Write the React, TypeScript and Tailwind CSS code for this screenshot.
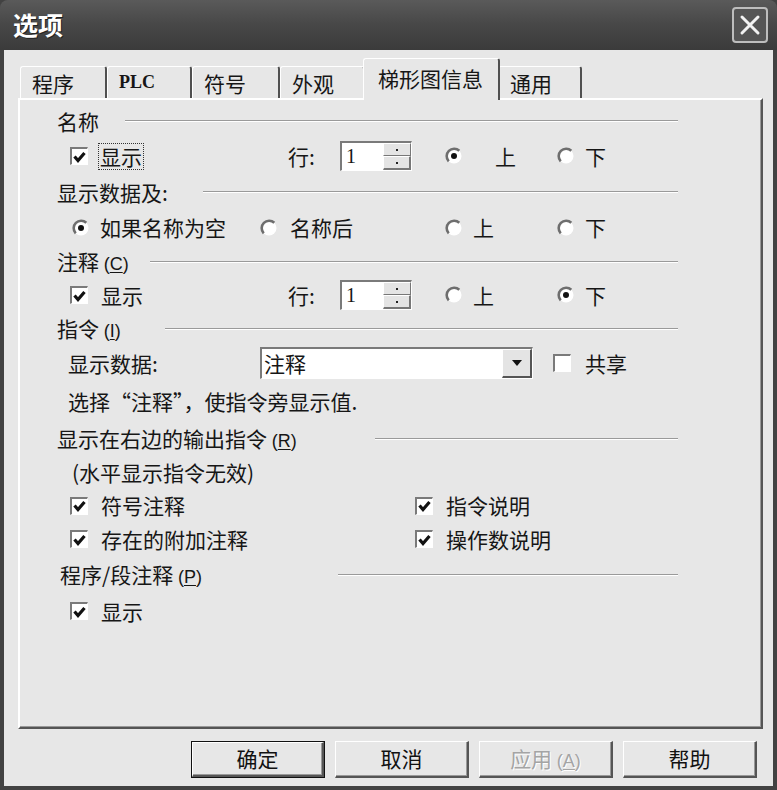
import React from "react";

const FONT = "font-['Noto_Sans_CJK_SC','Noto_Sans_CJK_JP',sans-serif]";

function Check({ checked = true }: { checked?: boolean }) {
  return (
    <span className="flex h-[18px] w-[18px] shrink-0 items-center justify-center border-l-2 border-t-2 border-r border-b border-l-[#7a7a7a] border-t-[#7a7a7a] border-r-white border-b-white bg-white">
      {checked && (
        <svg width="13" height="12" viewBox="0 0 13 12">
          <path d="M1.5 5.5 L5 9.5 L11.5 2" fill="none" stroke="#111" strokeWidth="3.2" />
        </svg>
      )}
    </span>
  );
}

function Radio({ on = false }: { on?: boolean }) {
  return (
    <svg width="18" height="18" viewBox="0 0 18 18" className="shrink-0">
      <circle cx="9" cy="9" r="7.5" fill="#fff" />
      <path d="M14.3 3.7 A7.5 7.5 0 0 0 3.7 14.3" fill="none" stroke="#6e6e6e" strokeWidth="2.6" />
      {on && <circle cx="9" cy="9" r="3" fill="#111" />}
    </svg>
  );
}

function Spin() {
  return (
    <div className="flex h-[30px] w-[72px] shrink-0 border-l-2 border-t-2 border-r border-b border-l-[#7a7a7a] border-t-[#7a7a7a] border-r-white border-b-white bg-white">
      <span className="flex-1 pl-[4px] font-['Liberation_Serif',serif] text-[20px] leading-[27px]">1</span>
      <div className="flex w-[28px] flex-col">
        <div className="flex flex-1 items-center justify-center border-b border-r border-b-[#777] border-r-[#777] border-l border-t border-l-white border-t-white bg-[#e4e4e4]">
          <span className="h-[2px] w-[2px] bg-[#222]" />
        </div>
        <div className="flex flex-1 items-center justify-center border-b-2 border-r-2 border-b-[#777] border-r-[#777] border-l border-t border-l-white border-t-white bg-[#e4e4e4]">
          <span className="h-[2px] w-[2px] bg-[#222]" />
        </div>
      </div>
    </div>
  );
}

function Header({ text, cell, pl = "pl-[37px]", h }: { text: React.ReactNode; cell: string; pl?: string; h: string }) {
  return (
    <div className={`flex items-center pr-[83px] ${pl} ${h}`}>
      <span className={`shrink-0 whitespace-nowrap ${cell}`}>{text}</span>
      <div className="h-[2px] flex-1 border-t border-b border-t-[#9a9a9a] border-b-white" />
    </div>
  );
}

function Key({ k }: { k: string }) {
  return (
    <span className="font-['Liberation_Sans',sans-serif] text-[18px]">
      (<span className="underline underline-offset-2">{k}</span>)
    </span>
  );
}

function Tab({ label, w, active = false, latin = false }: { label: string; w: string; active?: boolean; latin?: boolean }) {
  if (active) {
    return (
      <div className={`relative z-10 -mb-[2px] -mx-[2px] flex h-[42px] items-start pt-[5px] pl-[14px] rounded-t-[3px] border-l border-t border-l-white border-t-white border-r-2 border-r-[#505050] bg-[#e7e7e7] ${w}`}>
        <span className="text-[21px] leading-[28px]">{label}</span>
      </div>
    );
  }
  return (
    <div className={`flex h-[32px] items-center pl-[11px] rounded-t-[3px] border-l border-t border-l-white border-t-white border-r-2 border-r-[#505050] ${w}`}>
      <span className={latin ? "font-['Liberation_Serif',serif] text-[18px] font-bold" : "text-[21px] leading-[28px]"}>{label}</span>
    </div>
  );
}

function Btn({ label, def = false, disabled = false }: { label: React.ReactNode; def?: boolean; disabled?: boolean }) {
  return (
    <div className={`flex h-[37px] w-[134px] items-center justify-center ${def ? "border border-[#111]" : ""}`}>
      <div className="flex h-full w-full items-center justify-center border-l border-t border-l-white border-t-white border-r-2 border-b-2 border-r-[#555] border-b-[#555] bg-[#e7e7e7] shadow-[inset_-1px_-1px_#999]">
        <span className={`text-[21px] ${disabled ? "text-[#a4a4a4] [text-shadow:1px_1px_#fff]" : "text-[#111]"}`}>{label}</span>
      </div>
    </div>
  );
}

export default function App() {
  return (
    <div className={`flex h-[790px] w-[777px] flex-col bg-[#424242] text-[#161616] ${FONT}`}>
      {/* title bar */}
      <div className="flex h-[50px] shrink-0 items-center justify-between rounded-t-[8px] bg-gradient-to-b from-[#5a5a5a] via-[#474747] to-[#3b3b3b] pl-[13px] pr-[9px]">
        <span className="text-[25px] font-bold text-white [text-shadow:1px_1px_#222]">选项</span>
        <div className="flex h-[36px] w-[36px] items-center justify-center rounded-[4px] border-2 border-[#bdbdbd] bg-[#555]">
          <svg width="22" height="22" viewBox="0 0 22 22">
            <path d="M3 3 L19 19 M19 3 L3 19" stroke="#f2f2f2" strokeWidth="3" strokeLinecap="round" />
          </svg>
        </div>
      </div>

      {/* body */}
      <div className="mx-[4px] mb-[4px] flex flex-1 flex-col bg-[#e7e7e7]">
        {/* tabs */}
        <div className="flex h-[48px] shrink-0 items-end pl-[16px]">
          <Tab label="程序" w="w-[87px]" />
          <Tab label="PLC" w="w-[85px]" latin />
          <Tab label="符号" w="w-[88px]" />
          <Tab label="外观" w="w-[85px]" />
          <Tab label="梯形图信息" w="w-[137px]" active />
          <Tab label="通用" w="w-[84px]" />
        </div>

        {/* panel */}
        <div className="ml-[14px] mr-[10px] flex h-[631px] shrink-0 flex-col border-l-2 border-t-2 border-l-white border-t-white border-r-2 border-b-2 border-r-[#555] border-b-[#555] pt-[4px] text-[21px] leading-none shadow-[inset_-1px_-1px_#999]">
          <Header text="名称" cell="w-[68px]" h="h-[34px]" />

          <div className="flex h-[36px] items-center pl-[50px]">
            <div className="flex w-[218px] items-center">
              <Check />
              <span className="ml-[10px] border border-dotted border-[#333] px-[1px] py-[2px]">显示</span>
            </div>
            <span className="w-[52px]">行:</span>
            <Spin />
            <div className="w-[33px]" />
            <div className="flex w-[112px] items-center">
              <Radio on />
              <span className="ml-[32px]">上</span>
            </div>
            <Radio />
            <span className="ml-[10px]">下</span>
          </div>

          <Header text="显示数据及:" cell="w-[146px]" h="h-[36px]" />

          <div className="flex h-[35px] items-center pl-[52px]">
            <div className="flex w-[188px] items-center">
              <Radio on />
              <span className="ml-[10px]">如果名称为空</span>
            </div>
            <div className="flex w-[185px] items-center">
              <Radio />
              <span className="ml-[12px]">名称后</span>
            </div>
            <div className="flex w-[112px] items-center">
              <Radio />
              <span className="ml-[10px]">上</span>
            </div>
            <Radio />
            <span className="ml-[10px]">下</span>
          </div>

          <Header text={<>注释 <Key k="C" /></>} cell="w-[93px]" h="h-[33px]" />

          <div className="flex h-[34px] items-center pl-[50px]">
            <div className="flex w-[218px] items-center">
              <Check />
              <span className="ml-[13px]">显示</span>
            </div>
            <span className="w-[52px]">行:</span>
            <Spin />
            <div className="w-[33px]" />
            <div className="flex w-[112px] items-center">
              <Radio />
              <span className="ml-[10px]">上</span>
            </div>
            <Radio on />
            <span className="ml-[10px]">下</span>
          </div>

          <Header text={<>指令 <Key k="I" /></>} cell="w-[108px]" h="h-[33px]" />

          <div className="flex h-[36px] items-center pl-[48px]">
            <span className="w-[192px]">显示数据:</span>
            <div className="flex h-[32px] w-[273px] border-l-2 border-t-2 border-r border-b border-l-[#7a7a7a] border-t-[#7a7a7a] border-r-white border-b-white bg-white">
              <span className="flex-1 pl-[2px] leading-[28px]">注释</span>
              <div className="flex w-[30px] items-center justify-center border-l border-t border-l-white border-t-white border-r-2 border-b-2 border-r-[#555] border-b-[#555] bg-[#e4e4e4]">
                <svg width="10" height="6" viewBox="0 0 10 6">
                  <path d="M0 0 H10 L5 6 Z" fill="#111" />
                </svg>
              </div>
            </div>
            <div className="w-[20px]" />
            <Check checked={false} />
            <span className="ml-[14px]">共享</span>
          </div>

          <div className="flex h-[40px] items-center pl-[48px]">
            <span>选择“注释”，使指令旁显示值.</span>
          </div>

          <Header text={<>显示在右边的输出指令 <Key k="R" /></>} cell="w-[318px]" h="h-[35px]" />

          <div className="flex h-[33px] items-center pl-[52px]">
            <span>(水平显示指令无效)</span>
          </div>

          <div className="flex h-[33px] items-center pl-[50px]">
            <div className="flex w-[345px] items-center">
              <Check />
              <span className="ml-[13px]">符号注释</span>
            </div>
            <Check />
            <span className="ml-[13px]">指令说明</span>
          </div>

          <div className="flex h-[34px] items-center pl-[50px]">
            <div className="flex w-[345px] items-center">
              <Check />
              <span className="ml-[13px]">存在的附加注释</span>
            </div>
            <Check />
            <span className="ml-[13px]">操作数说明</span>
          </div>

          <Header text={<>程序/段注释 <Key k="P" /></>} cell="w-[278px]" pl="pl-[40px]" h="h-[37px]" />

          <div className="flex h-[36px] items-center pl-[50px]">
            <Check />
            <span className="ml-[13px]">显示</span>
          </div>
        </div>

        {/* buttons */}
        <div className="mt-[12px] flex justify-end gap-[10px] pr-[16px]">
          <Btn label="确定" def />
          <Btn label="取消" />
          <Btn label={<>应用 <Key k="A" /></>} disabled />
          <Btn label="帮助" />
        </div>
      </div>
    </div>
  );
}
